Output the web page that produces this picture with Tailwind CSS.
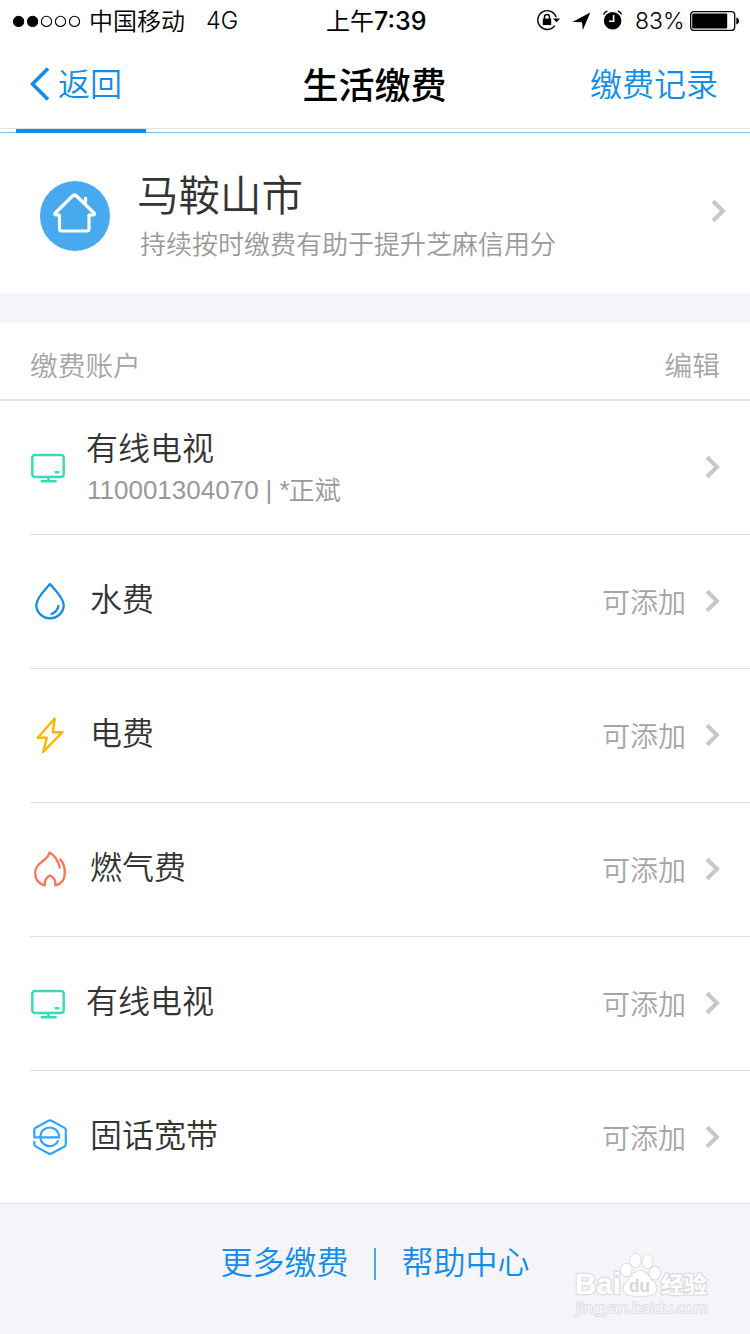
<!DOCTYPE html>
<html lang="zh-CN">
<head>
<meta charset="utf-8">
<title>生活缴费</title>
<script src="https://cdn.jsdelivr.net/npm/@tailwindcss/browser@4"></script>
</head>
<body class="bg-white">
<svg class="hidden">
  <symbol id="tv" viewBox="0 0 36 30"><g fill="none" stroke="#37d9b6" stroke-width="2.4" stroke-linecap="round"><rect x="2.300" y="2" width="31.400" height="22" rx="2.600"/><path d="M25.800 19.200h2.600M18.500 24v3.500M11.700 28.200h14"/></g></symbol>
  <symbol id="chev" viewBox="0 0 16 24"><path d="M2 2.300 12 12 2 21.700" fill="none" stroke="#c7c7cc" stroke-width="4"/></symbol>
</svg>
<main class="relative flex h-[1334px] w-[750px] flex-col overflow-hidden bg-white font-[350] font-['Noto_Sans_CJK_SC',sans-serif]">
  <!-- status bar -->
  <div class="grid h-10 shrink-0 grid-cols-[326px_1fr_214px] items-center text-2xl leading-10 text-black">
    <div class="flex items-center pl-3">
      <svg class="h-3 w-[70px]" viewBox="0 0 70 12"><g stroke="#000" stroke-width="1.1"><circle cx="6.6" cy="6.4" r="5.1"/><circle cx="20.6" cy="6.4" r="5.1"/><g fill="none"><circle cx="34.5" cy="6.4" r="5.1"/><circle cx="48.5" cy="6.4" r="5.1"/><circle cx="62.5" cy="6.4" r="5.1"/></g></g></svg>
      <span class="-mt-[1px] ml-[7px]">中国移动</span>
      <span class="mt-[1px] ml-[21px] font-[Inter,sans-serif] text-[23.500px] font-[350]">4G</span>
    </div>
    <div class="flex items-center"><span class="-mt-[1px] font-normal">上午</span><span class="mt-[1px] font-[Inter,sans-serif] text-[25px] font-medium">7:39</span></div>
    <div class="flex items-center">
      <svg class="-mt-[1px] h-6 w-6" viewBox="0 0 24 24"><path d="M18.8 17.6A9.4 9.4 0 1 1 20.2 9.3" fill="none" stroke="#000" stroke-width="1.4"/><path d="M17 10.4h7l-3.5 3.8z"/><path d="M6.8 10.6h8.4v6.4H6.8z"/><path d="M8.5 11V9a2.5 2.5 0 0 1 5 0v2" fill="none" stroke="#000" stroke-width="1.4"/></svg>
      <svg class="ml-3 h-5 w-5" viewBox="0 0 20 20"><path d="M18.3 1.500 10.800 19 10 11.200.4 11z"/></svg>
      <svg class="-mt-[2px] ml-[10px] h-[22px] w-[22px]" viewBox="0 0 22 22"><circle cx="10.600" cy="11.800" r="8.800"/><path d="M1.600 5.400A6 6 0 0 1 5.400 2M15.800 2a6 6 0 0 1 3.800 3.400" fill="none" stroke="#000" stroke-width="1.400"/><path d="M11.600 6v6.200H7" fill="none" stroke="#fff" stroke-width="1.600"/></svg>
      <span class="mt-[1px] ml-[11px] w-[53px] font-[Inter,sans-serif] text-[23px] font-[350]">83%</span>
      <svg class="ml-[2px] h-5 w-[50px]" viewBox="0 0 50 20"><rect x=".7" y=".7" width="44" height="18.6" rx="3" fill="none" stroke="#000" stroke-width="1.3"/><rect x="2.2" y="2.4" width="35" height="15.2" rx="1"/><path d="M46.3 6.5q2.7.7 2.7 3.5t-2.7 3.5z"/></svg>
    </div>
  </div>
  <!-- navigation -->
  <header class="grid h-[89px] shrink-0 grid-cols-3 items-center border-b border-[#e2e2e2] pr-[32px] pl-[30px] text-[32px] text-[#108ee9]">
    <div class="flex items-center">
      <svg class="h-[34px] w-5" viewBox="0 0 20 34"><path d="M18 1.5 2.5 17 18 32.500" fill="none" stroke="#108ee9" stroke-width="3.6"/></svg>
      <span class="-mt-[4px] ml-[8px]">返回</span>
    </div>
    <h1 class="-mt-[3px] pl-[1px] text-center text-4xl font-medium text-black">生活缴费</h1>
    <a class="-mt-[4px] text-right">缴费记录</a>
  </header>
  <div class="h-1 shrink-0 border-b border-[#6fbdf3] px-4"><div class="h-[4px] w-[130px] bg-[#108ee9]"></div></div>
  <!-- city -->
  <section class="flex h-40 shrink-0 items-center pr-[23px] pl-10">
    <svg class="mt-[6px] h-[70px] w-[70px]" viewBox="0 0 70 70"><circle cx="35" cy="35" r="35" fill="#49a9ee"/><path d="M19.500 34h-3.500q-2-.7-.7-2L32.500 15q2-2 4 0L54 32q1.300 1.300-.7 2H49v14q0 2-2 2H21.500q-2 0-2-2zM45.500 22.500V16" fill="none" stroke="#fff" stroke-width="3.200" stroke-linejoin="round"/></svg>
    <div class="ml-[27px] grow">
      <div class="mt-[5px] text-[41.500px] leading-[54px] text-[#333]">马鞍山市</div>
      <div class="pl-[3px] text-[26px] leading-[46px] text-[#999]">持续按时缴费有助于提升芝麻信用分</div>
    </div>
    <svg class="-mt-[4px] h-6 w-4"><use href="#chev"/></svg>
  </section>
  <div class="h-[30px] shrink-0 bg-[#f4f4f9]"></div>
  <!-- accounts -->
  <div class="flex h-[78px] shrink-0 items-center justify-between border-b-2 border-[#e5e5e5] px-[30px] pt-[7px] text-[27.700px] text-[#a5a5a5]"><span>缴费账户</span><span>编辑</span></div>
  <ul class="text-[32px] text-[#333]">
    <li class="ml-[30px] flex h-[134px] items-center border-b border-[#ddd] pr-[29px]">
      <svg class="h-[30px] w-9"><use href="#tv"/></svg>
      <div class="ml-5 grow">
        <div class="leading-[42px]">有线电视</div>
        <div class="flex items-center pl-[1px] text-[26px] leading-[42px] text-[#999]"><span class="pt-[2px] font-normal font-['Liberation_Sans',sans-serif]">110001304070<span class="pl-[7px]">|</span>&nbsp;*</span><span class="-ml-[1px]">正斌</span></div>
      </div>
      <svg class="-mt-[2px] h-6 w-4"><use href="#chev"/></svg>
    </li>
    <li class="ml-[30px] flex h-[134px] items-center border-b border-[#ddd] pr-[29px]">
      <svg class="-mt-[1px] h-10 w-10" viewBox="0 0 40 40" fill="none" stroke="#108ee9" stroke-width="2.300" stroke-linecap="round"><path d="M20 3C17 6.500 6.300 17 6.300 24a13.700 13.300 0 0 0 27.400 0C33.700 17 23 6.500 20 3z" stroke-linejoin="round"/><path d="M28.500 25q-1.500 6-7 8"/></svg>
      <span class="-mt-[9px] ml-5 grow">水费</span><span class="-mt-[1px] mr-[19px] text-[28px] text-[#a5a5a5]">可添加</span>
      <svg class="-mt-[2px] h-6 w-4"><use href="#chev"/></svg>
    </li>
    <li class="ml-[30px] flex h-[134px] items-center border-b border-[#ddd] pr-[29px]">
      <svg class="-mt-[2px] h-10 w-10" viewBox="0 0 40 40" fill="none" stroke="#ffb400" stroke-width="2.400" stroke-linejoin="round"><path d="M24.600 3.500 7.800 22.800h9L13.200 37 32.400 17.200H22.900z"/></svg>
      <span class="-mt-[9px] ml-5 grow">电费</span><span class="-mt-[1px] mr-[19px] text-[28px] text-[#a5a5a5]">可添加</span>
      <svg class="-mt-[2px] h-6 w-4"><use href="#chev"/></svg>
    </li>
    <li class="ml-[30px] flex h-[134px] items-center border-b border-[#ddd] pr-[29px]">
      <svg class="-mt-[1px] h-10 w-10" viewBox="0 0 40 40" fill="none" stroke="#ff7350" stroke-width="2.300" stroke-linecap="round" stroke-linejoin="round"><path d="M29.800 18.500C28 11.500 25 6.500 19.500 3.500 18 12 5.200 13 5.200 24c0 7 4.300 11 9.600 12.300-.6-5.500 2.200-8.300 5.200-9.800 3.200 1.500 6 4.500 5.300 9.800 6.500-1.300 9.500-6 9.500-12.800 0-5-1.500-9.500-4.300-13"/></svg>
      <span class="-mt-[9px] ml-5 grow">燃气费</span><span class="-mt-[1px] mr-[19px] text-[28px] text-[#a5a5a5]">可添加</span>
      <svg class="-mt-[2px] h-6 w-4"><use href="#chev"/></svg>
    </li>
    <li class="ml-[30px] flex h-[134px] items-center border-b border-[#ddd] pr-[29px]">
      <svg class="h-[30px] w-9"><use href="#tv"/></svg>
      <span class="-mt-[9px] ml-5 grow">有线电视</span><span class="-mt-[1px] mr-[19px] text-[28px] text-[#a5a5a5]">可添加</span>
      <svg class="-mt-[2px] h-6 w-4"><use href="#chev"/></svg>
    </li>
    <li class="ml-[30px] flex h-[132px] items-center pr-[29px]">
      <svg class="h-10 w-10" viewBox="0 0 40 40" fill="none" stroke="#33a3ff" stroke-width="2.200" stroke-linecap="round" stroke-linejoin="round"><path d="M29 20.400H4.300V13q0-1.500 1.300-2.200L18.500 3.700q1.500-.8 3 0l13 7.200q1.300.8 1.300 2.300v14q0 1.500-1.300 2.300l-13 7q-1.500.8-3 0L5.600 29.400Q4.300 28.500 4.300 27v-2.200"/><path d="M29 20.400a9.300 9.300 0 1 0-1 3.700"/></svg>
      <span class="-mt-[8px] ml-5 grow">固话宽带</span><span class="mr-[19px] text-[28px] text-[#a5a5a5]">可添加</span>
      <svg class="h-6 w-4"><use href="#chev"/></svg>
    </li>
  </ul>
  <!-- footer -->
  <footer class="flex grow items-start justify-center border-t border-[#ddd] bg-[#f4f4f9] pt-[34px] text-[32px] leading-[44px] text-[#108ee9]">
    <a>更多缴费</a><span class="mr-[26px] ml-[25px] mt-[10px] h-8 w-[2px] bg-[#4aa9ee]"></span><a>帮助中心</a>
  </footer>
  <!-- watermark -->
  <svg class="absolute top-[1250px] left-[572px] h-[72px] w-[142px]" viewBox="0 0 142 72" fill="#fff" stroke="#dcdce0" stroke-width="2.500" paint-order="stroke" stroke-linejoin="round">
    <text x="3" y="44" font-family="Liberation Sans, sans-serif" font-weight="700" font-size="29" textLength="46" lengthAdjust="spacingAndGlyphs">Bai</text>
    <g stroke-width="1.800"><ellipse cx="54.300" cy="20" rx="5.300" ry="6.300"/><ellipse cx="63.500" cy="10.500" rx="5" ry="6.700"/><ellipse cx="75.700" cy="11.500" rx="5" ry="6.700"/><ellipse cx="83" cy="23" rx="5.300" ry="6.500"/><path d="M68 21c7 0 9 7 13.500 11 5 5 3.500 13-4 13.500-4 .3-15 .3-19 0-7.500-.5-9-8.500-4-13.500C59 28 61 21 68 21z"/></g>
    <text x="57" y="42" font-family="Liberation Sans, sans-serif" font-weight="700" font-size="19" fill="#d6d6da" stroke="none" textLength="21" lengthAdjust="spacingAndGlyphs">du</text>
    <text x="89" y="43" font-family="Noto Sans CJK SC, sans-serif" font-weight="700" font-size="23">经验</text>
    <text x="4" y="63" font-family="Noto Sans, sans-serif" font-size="15" stroke-width="1.800" textLength="132" lengthAdjust="spacingAndGlyphs">jingyan.baidu.com</text>
  </svg>
</main>
</body>
</html>
